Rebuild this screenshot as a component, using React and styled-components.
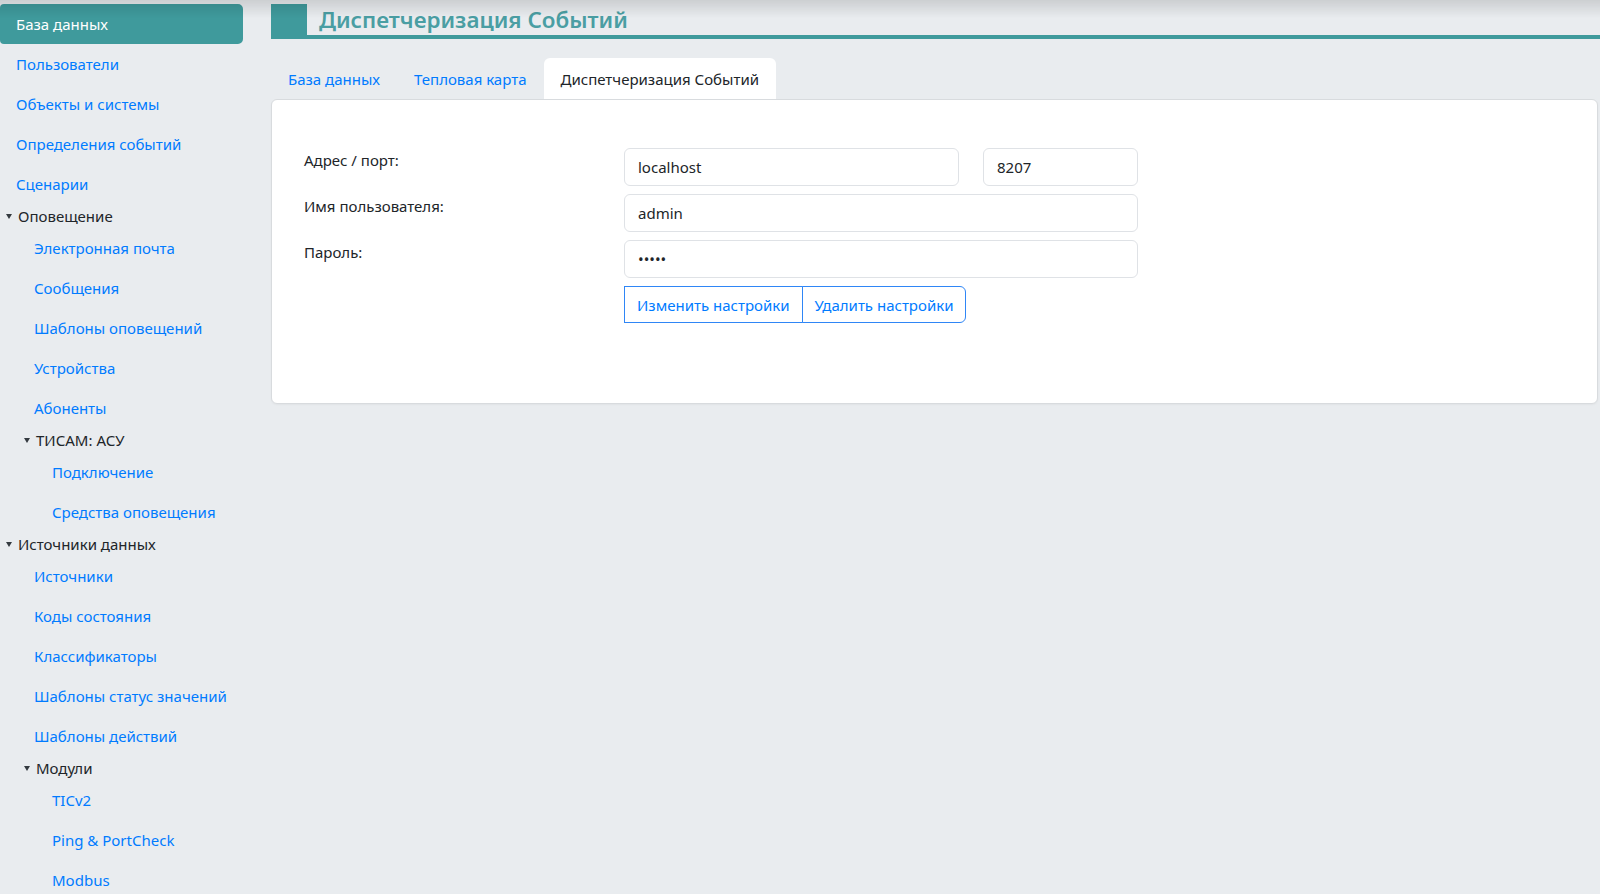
import React from "react";
import styled, { createGlobalStyle } from "styled-components";

const teal = "#3f9a9c";
const blue = "#007bff";

const GlobalStyle = createGlobalStyle`
  html, body {
    margin: 0;
    padding: 0;
    background: #e9ecef;
  }
  body {
    font-family: "Segoe UI", "Noto Sans", "Open Sans", sans-serif;
    font-size: 15px;
    line-height: 24px;
    color: #212529;
  }
  * {
    box-sizing: border-box;
  }
`;

const menu = [
  { label: "Пользователи", level: 0 },
  { label: "Объекты и системы", level: 0 },
  { label: "Определения событий", level: 0 },
  { label: "Сценарии", level: 0 },
  { group: "Оповещение", level: 0 },
  { label: "Электронная почта", level: 1 },
  { label: "Сообщения", level: 1 },
  { label: "Шаблоны оповещений", level: 1 },
  { label: "Устройства", level: 1 },
  { label: "Абоненты", level: 1 },
  { group: "ТИСАМ: АСУ", level: 1 },
  { label: "Подключение", level: 2 },
  { label: "Средства оповещения", level: 2 },
  { group: "Источники данных", level: 0 },
  { label: "Источники", level: 1 },
  { label: "Коды состояния", level: 1 },
  { label: "Классификаторы", level: 1 },
  { label: "Шаблоны статус значений", level: 1 },
  { label: "Шаблоны действий", level: 1 },
  { group: "Модули", level: 1 },
  { label: "TICv2", level: 2 },
  { label: "Ping & PortCheck", level: 2 },
  { label: "Modbus", level: 2 },
];

const tabs = ["База данных", "Тепловая карта", "Диспетчеризация Событий"];

function App() {
  return (
    <Page>
      <GlobalStyle />
      <Sidebar>
        <ActiveItem>База данных</ActiveItem>
        {menu.map((item, i) =>
          item.group ? (
            <GroupHeader key={i} $level={item.level}>
              <Caret />
              {item.group}
            </GroupHeader>
          ) : (
            <NavLink key={i} href="#" $level={item.level}>
              {item.label}
            </NavLink>
          )
        )}
      </Sidebar>

      <Main>
        <Header>
          <Mark />
          <Title>Диспетчеризация Событий</Title>
        </Header>

        <Tabs>
          {tabs.map((t, i) => (
            <Tab key={t} $active={i === 2}>
              {t}
            </Tab>
          ))}
        </Tabs>

        <Card>
          <Form>
            <Label>Адрес / порт:</Label>
            <HostRow>
              <Input defaultValue="localhost" />
              <Input defaultValue="8207" />
            </HostRow>

            <Label>Имя пользователя:</Label>
            <Input defaultValue="admin" />

            <Label>Пароль:</Label>
            <Input type="password" defaultValue="admin" />

            <span />
            <ButtonGroup>
              <OutlineButton>Изменить настройки</OutlineButton>
              <OutlineButton>Удалить настройки</OutlineButton>
            </ButtonGroup>
          </Form>
        </Card>
      </Main>
    </Page>
  );
}

const Page = styled.div`
  display: grid;
  grid-template-columns: 243px 1fr;
  column-gap: 28px;
  min-height: 894px;

  &::before {
    content: "";
    position: fixed;
    top: 0;
    left: 0;
    right: 0;
    height: 18px;
    background: linear-gradient(rgba(0, 0, 0, 0.12), rgba(0, 0, 0, 0));
    pointer-events: none;
    z-index: 2;
  }
`;

const Sidebar = styled.nav`
  display: flex;
  flex-direction: column;
  padding-top: 4px;
`;

const ActiveItem = styled.div`
  height: 40px;
  display: flex;
  align-items: center;
  padding-left: 16px;
  background: ${teal};
  color: #fff;
  border-radius: 4px 5px 5px 4px;
`;

const NavLink = styled.a`
  height: 40px;
  display: flex;
  align-items: center;
  padding-left: ${(p) => 16 + p.$level * 18}px;
  color: ${blue};
  text-decoration: none;
  white-space: nowrap;
`;

const GroupHeader = styled.div`
  height: 24px;
  display: flex;
  align-items: center;
  padding-left: ${(p) => 6 + p.$level * 18}px;
  color: #212529;
  white-space: nowrap;
`;

const Caret = styled.span`
  width: 0;
  height: 0;
  border-left: 3px solid transparent;
  border-right: 3px solid transparent;
  border-top: 5px solid #343a40;
  margin-right: 6px;
`;

const Main = styled.main`
  display: flex;
  flex-direction: column;
  padding-top: 4px;
`;

const Header = styled.div`
  display: flex;
  align-items: center;
  border-bottom: 4px solid ${teal};
`;

const Mark = styled.div`
  width: 36px;
  height: 31px;
  background: ${teal};
`;

const Title = styled.h1`
  margin: 0 0 0 12px;
  font-size: 22.4px;
  line-height: 31px;
  font-weight: 600;
  color: #4a9ea3;
`;

const Tabs = styled.div`
  display: flex;
  margin-top: 19px;
`;

const Tab = styled.a`
  height: 41px;
  padding: 0 16px;
  display: flex;
  align-items: center;
  color: ${(p) => (p.$active ? "#212529" : blue)};
  background: ${(p) => (p.$active ? "#fff" : "transparent")};
  border-radius: 6px 6px 0 0;
  border: 1px solid transparent;
  border-bottom: 0;
  cursor: pointer;
`;

const Card = styled.section`
  margin-right: 2px;
  background: #fff;
  border: 1px solid #d8dbde;
  border-radius: 6px;
  padding: 48px 0 80px 32px;
  box-shadow: 0 1px 2px rgba(0, 0, 0, 0.04);
`;

const Form = styled.div`
  display: grid;
  grid-template-columns: 320px 514px;
  row-gap: 8px;
`;

const Label = styled.label`
  line-height: 24px;
`;

const HostRow = styled.div`
  display: grid;
  grid-template-columns: 1fr 155px;
  column-gap: 24px;
`;

const Input = styled.input`
  width: 100%;
  height: 38px;
  padding: 0 13px;
  border: 1px solid #dfe2e6;
  border-radius: 6px;
  font: inherit;
  color: #212529;
  background: #fff;
  outline: none;
`;

const ButtonGroup = styled.div`
  display: flex;
  justify-self: start;
`;

const OutlineButton = styled.button`
  height: 37px;
  padding: 0 12px;
  font: inherit;
  color: ${blue};
  background: #fff;
  border: 1px solid #2f86f6;
  border-radius: 0;
  cursor: pointer;

  & + & {
    margin-left: -1px;
    border-radius: 0 6px 6px 0;
  }
`;

export default App;
